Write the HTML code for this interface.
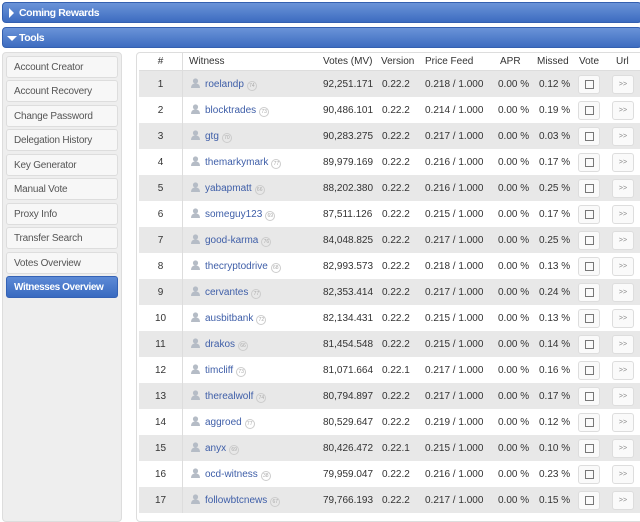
<!DOCTYPE html>
<html><head><meta charset="utf-8"><style>
*{margin:0;padding:0;box-sizing:border-box}
body{width:640px;height:517px;overflow:hidden;background:#fff;font-family:"Liberation Sans",sans-serif;font-size:10px;color:#333;position:relative}
.bar{position:absolute;left:2px;width:640px;height:21px;border-radius:4px;background:linear-gradient(#6a93d8,#3d6cc0);border:1px solid #3460b0;color:#fff;font-weight:bold;font-size:10.5px;letter-spacing:-0.4px;line-height:20px;padding-left:16px}
.tri{position:absolute;left:6px;top:5px;width:0;height:0}
.side{position:absolute;left:2px;top:52px;width:120px;height:470px;background:#eeeeee;border:1px solid #ddd;border-radius:4px}
.btn{position:absolute;left:3px;width:112px;height:22px;background:#f7f7f7;border:1px solid #ddd;border-radius:3px;font-size:10px;line-height:21px;padding-left:7px;color:#555;letter-spacing:-0.2px}
.btn.act{background:linear-gradient(#5d8ad6,#386ac0);border-color:#3462b5;color:#fff;font-weight:bold;letter-spacing:-0.4px}
.tbl{position:absolute;left:136px;top:52px;width:510px;height:470px;border:1px solid #ddd;border-radius:4px;background:#fff}
.row{position:absolute;left:139px;width:501px;height:26px;line-height:28px}
.row.g{background:#e8e8e8}
.row>span{position:absolute;top:0}
.hd{position:absolute;left:139px;top:52px;width:501px;height:19px;line-height:20px;color:#333;border-bottom:1px solid #ddd}
.hd span{position:absolute}
.c1{left:0;width:44px;text-align:center;border-right:1px solid #ddd;height:26px}
.hd .c1{height:19px}
.w{left:52px;color:#3e5ea8}
.u{display:inline-block;width:9px;height:10px;position:relative;top:1px;margin-right:5px}
.rk{display:inline-block;width:10px;height:10px;border:1px solid #ccc;border-radius:50%;font-size:5px;line-height:8px;text-align:center;color:#aaa;margin-left:3px;vertical-align:0;position:relative;top:0}
.vb{left:439px;top:4px!important;width:22px;height:19px;border:1px solid #ddd;border-radius:3px;background:#fafafa}
.vb i{position:absolute;left:6px;top:4px;width:9px;height:9px;border:1px solid #777}
.ub{left:473px;top:4px!important;width:22px;height:19px;border:1px solid #ddd;border-radius:3px;background:#fafafa;font-size:7px;line-height:17px!important;text-align:center;color:#888}
</style></head><body>
<div class="bar" style="top:2px"><div class="tri" style="border-left:5px solid #fff;border-top:5px solid transparent;border-bottom:5px solid transparent;top:5px;left:6px"></div>Coming Rewards</div>
<div class="bar" style="top:27px"><div class="tri" style="border-top:5px solid #fff;border-left:5px solid transparent;border-right:5px solid transparent;top:8px;left:4px"></div>Tools</div>
<div class="side">
<div class="btn" style="top:3px">Account Creator</div>
<div class="btn" style="top:27px">Account Recovery</div>
<div class="btn" style="top:52px">Change Password</div>
<div class="btn" style="top:76px">Delegation History</div>
<div class="btn" style="top:101px">Key Generator</div>
<div class="btn" style="top:125px">Manual Vote</div>
<div class="btn" style="top:150px">Proxy Info</div>
<div class="btn" style="top:174px">Transfer Search</div>
<div class="btn" style="top:199px">Votes Overview</div>
<div class="btn act" style="top:223px">Witnesses Overview</div>
</div>
<div class="tbl"></div>
<div class="hd"><span class="c1">#</span><span style="left:50px">Witness</span><span style="left:184px">Votes (MV)</span><span style="left:242px">Version</span><span style="left:286px">Price Feed</span><span style="left:361px">APR</span><span style="left:398px">Missed</span><span style="left:440px">Vote</span><span style="left:477px">Url</span></div>
<div id="rows"></div>
<script>
var d=[["roelandp",74,"92,251.171","0.22.2","0.218","0.12"],["blocktrades",73,"90,486.101","0.22.2","0.214","0.19"],["gtg",70,"90,283.275","0.22.2","0.217","0.03"],["themarkymark",77,"89,979.169","0.22.2","0.216","0.17"],["yabapmatt",66,"88,202.380","0.22.2","0.216","0.25"],["someguy123",69,"87,511.126","0.22.2","0.215","0.17"],["good-karma",76,"84,048.825","0.22.2","0.217","0.25"],["thecryptodrive",68,"82,993.573","0.22.2","0.218","0.13"],["cervantes",77,"82,353.414","0.22.2","0.217","0.24"],["ausbitbank",72,"82,134.431","0.22.2","0.215","0.13"],["drakos",66,"81,454.548","0.22.2","0.215","0.14"],["timcliff",73,"81,071.664","0.22.1","0.217","0.16"],["therealwolf",74,"80,794.897","0.22.2","0.217","0.17"],["aggroed",77,"80,529.647","0.22.2","0.219","0.12"],["anyx",69,"80,426.472","0.22.1","0.215","0.10"],["ocd-witness",38,"79,959.047","0.22.2","0.216","0.23"],["followbtcnews",67,"79,766.193","0.22.2","0.217","0.15"]];
var h="";
var ic='<svg class="u" viewBox="0 0 9 10"><circle cx="4.5" cy="3" r="2.6" fill="#b5bcc6"/><path d="M0 10Q0 5.5 4.5 5.5Q9 5.5 9 10Z" fill="#b5bcc6"/></svg>';
d.forEach(function(r,i){h+='<div class="row'+(i%2==0?' g':'')+'" style="top:'+(71+26*i)+'px"><span class="c1">'+(i+1)+'</span><span class="w">'+ic+r[0]+'<span class="rk">'+r[1]+'</span></span><span style="left:184px">'+r[2]+'</span><span style="left:243px">'+r[3]+'</span><span style="left:286px">'+r[4]+' / 1.000</span><span style="left:359px">0.00 %</span><span style="left:400px">'+r[5]+' %</span><span class="vb"><i></i></span><span class="ub">&gt;&gt;</span></div>';});
document.getElementById("rows").innerHTML=h;
</script>
</body></html>
